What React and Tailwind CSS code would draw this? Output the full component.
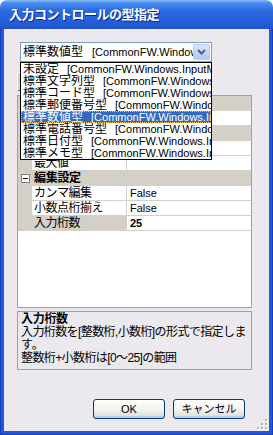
import React from 'react';

const items = [
  ['未設定', '[CommonFW.Windows.InputManType.None]'],
  ['標準文字列型', '[CommonFW.Windows.InputManType.String]'],
  ['標準コード型', '[CommonFW.Windows.InputManType.Code]'],
  ['標準郵便番号型', '[CommonFW.Windows.InputManType.Zip]'],
  ['標準数値型', '[CommonFW.Windows.InputManType.Number]'],
  ['標準電話番号型', '[CommonFW.Windows.InputManType.Tel]'],
  ['標準日付型', '[CommonFW.Windows.InputManType.Date]'],
  ['標準メモ型', '[CommonFW.Windows.InputManType.Memo]'],
];

const rows = [
  { cat: '基本設定' },
  { label: '入力モード', value: 'Number' },
  { cat: '範囲設定' },
  { label: '最小値', value: '' },
  { label: '最大値', value: '' },
  { cat: '編集設定' },
  { label: 'カンマ編集', value: 'False' },
  { label: '小数点桁揃え', value: 'False' },
  { label: '入力桁数', value: '25', selected: true },
];

function Minus() {
  return (
    <div className="w-[9px] h-[9px] border border-[#808080] bg-white flex items-center justify-center">
      <div className="w-[5px] h-[1px] bg-black" />
    </div>
  );
}

function GridRow({ row }) {
  if (row.cat) {
    return (
      <div className="h-[15px] flex items-center bg-[#d4d0c8]">
        <div className="w-[14px] flex justify-center pl-[1px]">
          <Minus />
        </div>
        <div className="pl-[2px] text-[12px] leading-[15px] font-bold text-black tracking-[-0.3px]">{row.cat}</div>
      </div>
    );
  }
  return (
    <div className="h-[15px] flex">
      <div className="w-[14px] bg-[#d4d0c8]" />
      <div
        className={`w-[94px] border-b border-[#d4d0c8] pl-[2px] text-[12px] leading-[14px] tracking-[-0.5px] whitespace-nowrap overflow-hidden ${
          row.selected ? 'bg-[#d4d0c8]' : 'bg-white'
        }`}
      >
        {row.label}
      </div>
      <div className="w-[1px] bg-[#d4d0c8]" />
      <div
        className={`flex-1 border-b border-[#d4d0c8] bg-white pl-[3px] text-[11px] leading-[14px] ${
          row.selected ? 'font-bold' : ''
        }`}
      >
        {row.value}
      </div>
    </div>
  );
}

export default function App() {
  return (
    <div className="w-[273px] h-[435px] flex flex-col font-['Liberation_Sans','Noto_Sans_CJK_JP',sans-serif] text-black bg-white">
      {/* Title bar */}
      <div className="h-[29px] rounded-t-[7px] bg-[linear-gradient(180deg,#8ab9f8_0%,#4a8ef2_10%,#2d6ae0_35%,#2560db_70%,#2152cc_100%)] flex items-center pl-[9px] pt-[1px]">
        <span className="text-white text-[13px] font-bold tracking-[-0.5px] [text-shadow:1px_1px_0_#0a2a8a]">
          入力コントロールの型指定
        </span>
      </div>

      {/* Frame */}
      <div className="flex-1 flex bg-[#2258d8] px-[4px] pb-[4px] shadow-[inset_1px_0_0_#123fb8,inset_-1px_0_0_#123fb8,inset_0_-1px_0_#123fb8]">
        <div className="relative flex-1 bg-[#ebe9ed] flex flex-col pl-[13px] pr-[17px]">
          {/* Combo box */}
          <div className="mt-[13px] ml-[3px] w-[192px] h-[20px] border border-[#7f9db9] bg-white flex items-center">
            <div className="flex-1 overflow-hidden whitespace-nowrap pl-[2px] flex items-center">
              <span className="text-[12px] leading-[18px]">標準数値型</span>
              <span className="ml-[9px] text-[11px] leading-[18px]">[CommonFW.Windows.InputManType.Number]</span>
            </div>
            <div className="w-[17px] h-[16px] mr-[1px] rounded-[2px] border border-[#b7cbf5] bg-[linear-gradient(180deg,#dbe6fd_0%,#c1d3fb_60%,#b2c7f6_100%)] flex items-center justify-center">
              <svg width="9" height="6" viewBox="0 0 9 6">
                <path d="M1 1 L4.5 4.5 L8 1" fill="none" stroke="#4d6185" strokeWidth="2" />
              </svg>
            </div>
          </div>

          {/* Property grid toolbar */}
          <div className="h-[33px] flex items-start">
            <div className="mt-[10px] w-[23px] h-[19px] border border-t-white border-l-white border-r-[#808080] border-b-[#808080] bg-[#d4d0c8]" />
          </div>

          {/* Property grid */}
          <div className="h-[213px] border border-[#a0a0a0] bg-white flex flex-col">
            {rows.map((r, i) => (
              <GridRow key={i} row={r} />
            ))}
          </div>

          {/* Description */}
          <div className="mt-[3px] h-[59px] border border-[#a0a0a0] pl-[3px] pt-[1px] text-[12px] leading-[13px] whitespace-nowrap overflow-hidden">
            <div className="font-bold tracking-[-0.3px]">入力桁数</div>
            <div className="tracking-[-0.6px]">入力桁数を[整数桁,小数桁]の形式で指定しま</div>
            <div>す。</div>
            <div className="tracking-[-0.6px]">整数桁+小数桁は[0～25]の範囲</div>
          </div>

          {/* Buttons */}
          <div className="mt-[29px] flex justify-end gap-[8px] pr-[7px]">
            <button className="w-[72px] h-[20px] rounded-[3px] border border-[#003c74] bg-[linear-gradient(180deg,#ffffff_0%,#f4f4f0_50%,#e3e2dc_85%,#d6d0c5_100%)] text-[11px] leading-[18px] shadow-[inset_0_-2px_0_#b8cdf0]">
              OK
            </button>
            <button className="w-[72px] h-[20px] rounded-[3px] border border-[#003c74] bg-[linear-gradient(180deg,#ffffff_0%,#f4f4f0_50%,#e3e2dc_85%,#d6d0c5_100%)] text-[11px] leading-[18px] shadow-[inset_0_-2px_0_#b8cdf0]">
              キャンセル
            </button>
          </div>

          {/* Resize grip */}
          <svg className="absolute right-[1px] bottom-[1px]" width="11" height="11" viewBox="0 0 11 11">
            {[[8, 0], [8, 4], [4, 4], [8, 8], [4, 8], [0, 8]].map(([x, y], i) => (
              <g key={i}>
                <rect x={x + 1} y={y + 1} width="2" height="2" fill="#ffffff" />
                <rect x={x} y={y} width="2" height="2" fill="#b9b7ae" />
              </g>
            ))}
          </svg>

          {/* Dropdown list */}
          <div className="absolute left-[16px] top-[33px] w-[192px] h-[98px] border border-black bg-white overflow-hidden">
            {items.map(([name, type], i) => (
              <div
                key={i}
                className={`h-[12px] flex items-center whitespace-nowrap overflow-hidden pl-[2px] ${
                  i === 4 ? 'bg-[#316ac5] text-white outline outline-1 outline-dotted outline-[#f0c060] -outline-offset-1' : ''
                }`}
              >
                <span className="text-[12px] leading-[12px]">{name}</span>
                <span className="ml-[8px] text-[11px] leading-[12px]">{type}</span>
              </div>
            ))}
          </div>
        </div>
      </div>
    </div>
  );
}
